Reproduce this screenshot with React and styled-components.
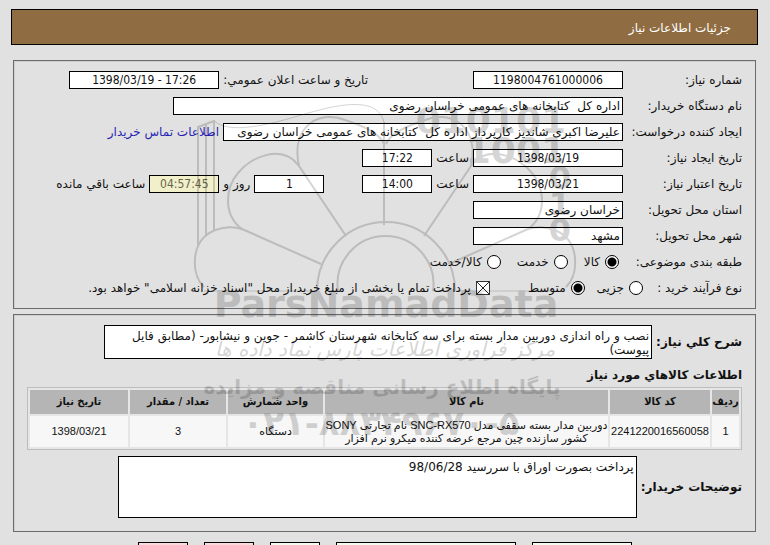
import React from "react";
import styled, { createGlobalStyle } from "styled-components";

const Global = createGlobalStyle`
  *, *::before, *::after { box-sizing: border-box; }
  body {
    margin: 0;
    background: #e1e1e1;
    color: #111;
    font: 12px/18px "DejaVu Sans", Tahoma, sans-serif;
  }
`;

const Page = styled.div`
  position: relative;
  height: 100vh;
  overflow: hidden;
  padding: 9px 12px 0 11px;
`;

const TitleBar = styled.header`
  display: flex;
  align-items: center;
  height: 36px;
  padding: 2px 26px 0 0;
  border: 1px solid #000;
  background: #8f6c41;
`;

const Title = styled.h1`
  margin: 0;
  color: #fff;
  font-size: 12px;
  font-weight: normal;
`;

const Panel = styled.section`
  margin: ${(p) => p.$top}px 2px 0;
  padding: 10px 13px 13px 13px;
  border: 1px solid #6b6b6b;
  box-shadow: inset 1px 1px 0 #cfcfcf;
`;

const Row = styled.div`
  display: flex;
  align-items: center;
  gap: 4px;
  height: 18px;
  margin-bottom: 8px;
  white-space: nowrap;

  &:last-child { margin-bottom: -2px; }
`;

const Label = styled.label`
  flex: none;
  width: ${(p) => p.$width || 115}px;
`;

const InlineLabel = styled.label`
  margin-right: ${(p) => p.$before || 0}px;
  margin-left: ${(p) => p.$after || 0}px;
`;

const Field = styled.input`
  width: ${(p) => p.$width}px;
  height: 18px;
  margin: 0;
  margin-right: ${(p) => p.$before || 0}px;
  padding: 0 2px;
  border: 1px solid #000;
  border-radius: 0;
  background: #fff;
  color: #111;
  font: 12px "DejaVu Sans", Tahoma, sans-serif;
  outline: 0;
`;

const NumberField = styled(Field)`
  background: ${(p) => (p.$countdown ? "#f2f0cb" : "#fff")};
  color: ${(p) => (p.$countdown ? "#66664a" : "#111")};
  font-family: "DejaVu Sans Condensed", Tahoma, sans-serif;
  text-align: center;
`;

const ContactLink = styled.a`
  color: #2a1fb5;
  text-decoration: none;
`;

const Choice = styled.label`
  display: flex;
  align-items: center;
  gap: 5px;
  margin-left: ${(p) => p.$after || 0}px;
`;

const Radio = styled.input.attrs({ type: "radio" })`
  appearance: none;
  flex: none;
  width: 14px;
  height: 14px;
  margin: 0;
  border: 1px solid #000;
  border-radius: 50%;
  background: #fff;

  &:checked {
    background: radial-gradient(circle, #000 4px, #fff 5px);
  }
`;

const Check = styled.input.attrs({ type: "checkbox" })`
  appearance: none;
  flex: none;
  width: 14px;
  height: 14px;
  margin: 0;
  border: 1px solid #333;
  background: #fff;

  &:checked {
    background:
      linear-gradient(45deg, transparent 47%, #222 49%, #222 51%, transparent 53%),
      linear-gradient(135deg, transparent 47%, #222 49%, #222 51%, transparent 53%),
      #fff;
  }
`;

const TextRow = styled.div`
  display: flex;
  align-items: center;
  gap: ${(p) => p.$gap}px;
  padding-left: ${(p) => p.$left}px;
`;

const BoldLabel = styled.label`
  flex: none;
  font: bold 12px/18px "DejaVu Sans", Tahoma, sans-serif;
`;

const TextBox = styled.textarea`
  flex: 1;
  min-width: 0;
  height: ${(p) => p.$height}px;
  margin: 0;
  padding: 3px 2px 0;
  border: 1px solid #000;
  border-radius: 0;
  background: #fff;
  color: #111;
  font: 12px/14px "DejaVu Sans", Tahoma, sans-serif;
  resize: none;
  overflow: hidden;
  outline: 0;
`;

const Heading = styled.h2`
  margin: 7px 0 3px;
  font: bold 12px/18px "DejaVu Sans", Tahoma, sans-serif;
`;

const Goods = styled.table`
  width: 100%;
  margin-bottom: 6px;
  border: 1px solid #bdbdbd;
  border-spacing: 2px;
  table-layout: fixed;
  background: #e6e6e6;
  font: 11px/13px "Liberation Sans", "DejaVu Sans", sans-serif;
  text-align: center;
`;

const Head = styled.th`
  width: ${(p) => (p.$width ? p.$width + "px" : "auto")};
  height: 24px;
  padding: 0;
  background: #b5b5b5;
  font: bold 11px/12px "DejaVu Sans Condensed", sans-serif;
  white-space: nowrap;
`;

const Cell = styled.td`
  height: 31px;
  padding: 0;
  background: #f7f7f7;
  white-space: nowrap;
`;

const Actions = styled.div`
  display: flex;
  gap: 16px;
  margin-top: 10px;
  padding-right: 126px;
`;

const ActionButton = styled.button`
  flex: none;
  width: ${(p) => p.$width}px;
  height: 24px;
  border: 1px solid #000;
  background: ${(p) => (p.$pink ? "#fbdcdc" : "#f3fbec")};
`;

const Overlay = styled.svg`
  position: absolute;
  top: 0;
  left: 0;
  pointer-events: none;
  direction: ltr;
  opacity: 0.16;
`;

const columns = [
  ["ردیف", 27],
  ["کد کالا", 100],
  ["نام کالا", 0],
  ["واحد شمارش", 95],
  ["تعداد / مقدار", 96],
  ["تاریخ نیاز", 98],
];

const buttons = [
  [100, false],
  [180, false],
  [50, false],
  [50, true],
  [50, true],
];

function Petals() {
  return (
    <>
      <path d="M321 264 L242 229 C228 224 198 228 195 258 C194 272 197 280 204 287" />
      <path d="M242 229 C222 214 226 187 238 173 C251 157 282 143 299 166 L346 236" />
      <path d="M299 166 C290 124 322 110 345 120 C360 125 379 132 384 144" />
    </>
  );
}

function Watermark() {
  return (
    <Overlay width="770" height="545" viewBox="0 0 770 545" aria-hidden="true">
      <g fill="none" stroke="#000" strokeWidth="2">
        <Petals />
        <g transform="matrix(-1 0 0 1 770 0)">
          <Petals />
        </g>
        <path d="M317 291 A69 69 0 1 1 455 291 M338 291 A48 48 0 1 1 433 291" />
        <path d="M384 225 V122 M198 246 V127 L214 121 V230 M206 236 V124" />
        <path d="M214 121 C230 134 265 126 305 114 C345 102 378 98 384 122" strokeWidth="1" />
        <path d="M433 291 H562 M204 291 H317" strokeWidth="1" />
      </g>
      <g fill="#000" fontFamily="DejaVu Sans" fontWeight="bold" textAnchor="end">
        <text x="566" y="133" fontSize="36">010101</text>
        <text x="566" y="163" fontSize="36">1001</text>
        <text x="571" y="189" fontSize="32">0</text>
        <text x="571" y="215" fontSize="32">1</text>
        <text x="571" y="241" fontSize="32">0</text>
      </g>
      <g fill="#000" fontFamily="DejaVu Sans" textAnchor="middle">
        <text x="386" y="317" fontSize="38" fontWeight="bold">ParsNamadData</text>
        <text x="385" y="356" fontSize="20" fontStyle="italic" direction="rtl">مرکز فرآوری اطلاعات پارس نماد داده ها</text>
        <text x="382" y="394" fontSize="20" fontWeight="bold" direction="rtl">پایگاه اطلاع رسانی مناقصه و مزایده</text>
        <text x="381" y="435" fontSize="34" fontWeight="bold">۰۲۱-۸۸۳۴۹۶۷۰-۵</text>
      </g>
    </Overlay>
  );
}

export default function App() {
  return (
    <Page dir="rtl" lang="fa">
      <Global />
      <TitleBar>
        <Title>جزئیات اطلاعات نیاز</Title>
      </TitleBar>

      <Panel $top={15}>
        <Row>
          <Label htmlFor="number">شماره نیاز:</Label>
          <NumberField id="number" dir="ltr" $width={150} readOnly value="1198004761000006" />
          <InlineLabel htmlFor="announced" $before={101}>تاریخ و ساعت اعلان عمومي:</InlineLabel>
          <NumberField id="announced" dir="ltr" $width={150} readOnly value="1398/03/19 - 17:26" />
        </Row>
        <Row>
          <Label htmlFor="agency">نام دستگاه خریدار:</Label>
          <Field id="agency" $width={450} readOnly value="اداره کل  کتابخانه های عمومی خراسان رضوی" />
        </Row>
        <Row>
          <Label htmlFor="creator">ایجاد کننده درخواست:</Label>
          <Field id="creator" $width={400} readOnly value="علیرضا اکبری شاندیز کارپرداز اداره کل  کتابخانه های عمومی خراسان رضوی" />
          <ContactLink href="#contact">اطلاعات تماس خریدار</ContactLink>
        </Row>
        <Row>
          <Label htmlFor="created">تاریخ ایجاد نیاز:</Label>
          <NumberField id="created" dir="ltr" $width={150} readOnly value="1398/03/19" />
          <InlineLabel htmlFor="createdTime">ساعت</InlineLabel>
          <NumberField id="createdTime" dir="ltr" $width={70} readOnly value="17:22" />
        </Row>
        <Row>
          <Label htmlFor="expires">تاریخ اعتبار نیاز:</Label>
          <NumberField id="expires" dir="ltr" $width={150} readOnly value="1398/03/21" />
          <InlineLabel htmlFor="expiresTime">ساعت</InlineLabel>
          <NumberField id="expiresTime" dir="ltr" $width={70} readOnly value="14:00" />
          <NumberField id="days" dir="ltr" $width={70} $before={34} readOnly value="1" />
          <InlineLabel htmlFor="days">روز و</InlineLabel>
          <NumberField id="remaining" dir="ltr" $width={70} $countdown readOnly value="04:57:45" />
          <InlineLabel htmlFor="remaining">ساعت باقي مانده</InlineLabel>
        </Row>
        <Row>
          <Label htmlFor="province">استان محل تحویل:</Label>
          <Field id="province" $width={150} readOnly value="خراسان رضوی" />
        </Row>
        <Row>
          <Label htmlFor="city">شهر محل تحویل:</Label>
          <Field id="city" $width={150} readOnly value="مشهد" />
        </Row>
        <Row>
          <Label as="span" $width={119}>طبقه بندی موضوعی:</Label>
          <Choice $after={12}><Radio name="category" defaultChecked />کالا</Choice>
          <Choice $after={12}><Radio name="category" />خدمت</Choice>
          <Choice><Radio name="category" />کالا/خدمت</Choice>
        </Row>
        <Row>
          <Label as="span" $width={95}>نوع فرآیند خرید :</Label>
          <Choice $after={8}><Radio name="process" />جزیی</Choice>
          <Choice $after={34}><Radio name="process" defaultChecked />متوسط</Choice>
          <Choice>
            <Check defaultChecked />
            پرداخت تمام یا بخشی از مبلغ خرید،از محل "اسناد خزانه اسلامی" خواهد بود.
          </Choice>
        </Row>
      </Panel>

      <Panel $top={5}>
        <TextRow $gap={4} $left={77}>
          <BoldLabel htmlFor="summary">شرح کلي نیاز:</BoldLabel>
          <TextBox
            id="summary"
            $height={34}
            readOnly
            value={"نصب و راه اندازی دوربین مدار بسته برای سه کتابخانه شهرستان کاشمر - جوین و نیشابور- (مطابق فایل پیوست)"}
          />
        </TextRow>
        <Heading>اطلاعات کالاهاي مورد نیاز</Heading>
        <Goods>
          <thead>
            <tr>
              {columns.map(([name, width]) => (
                <Head key={name} $width={width}>{name}</Head>
              ))}
            </tr>
          </thead>
          <tbody>
            <tr>
              <Cell>1</Cell>
              <Cell>2241220016560058</Cell>
              <Cell>
                دوربین مدار بسته سقفی مدل SNC-RX570 نام تجارتی SONY
                <br />
                کشور سازنده چین مرجع عرضه کننده میکرو نرم افزار
              </Cell>
              <Cell>دستگاه</Cell>
              <Cell>3</Cell>
              <Cell>1398/03/21</Cell>
            </tr>
          </tbody>
        </Goods>
        <TextRow $gap={4} $left={91}>
          <BoldLabel htmlFor="notes">توضیحات خریدار:</BoldLabel>
          <TextBox id="notes" $height={62} readOnly value="پرداخت بصورت اوراق با سررسید 98/06/28" />
        </TextRow>
      </Panel>

      <Actions>
        {buttons.map(([width, pink], i) => (
          <ActionButton key={i} type="button" $width={width} $pink={pink} />
        ))}
      </Actions>
      <Watermark />
    </Page>
  );
}
